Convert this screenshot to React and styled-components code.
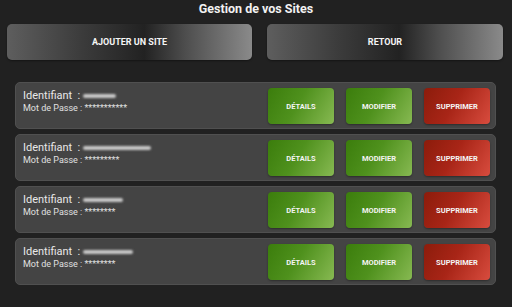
import React from "react";
import styled, { createGlobalStyle } from "styled-components";

const Global = createGlobalStyle`
  html, body { margin: 0; padding: 0; background: #212121; }
  body { font-family: Roboto, "Liberation Sans", sans-serif; color: #fff; }
`;

const Page = styled.div`
  width: 512px;
  height: 307px;
  background: #212121;
  overflow: hidden;
`;

const Title = styled.h1`
  margin: 0;
  height: 20px;
  line-height: 17px;
  text-align: center;
  font-size: 12.5px;
  font-weight: 700;
  color: #f2f2f2;
`;

const TopBar = styled.div`
  display: grid;
  grid-template-columns: 245px 236px;
  column-gap: 15px;
  padding: 4px 0 0 7px;
`;

const TopButton = styled.button`
  height: 36px;
  border: none;
  border-radius: 5px;
  background: linear-gradient(90deg, #5e5e5e 0%, #3c3c3c 30%, #222 56%, #4e4e4e 73%, #8a8a8a 100%);
  color: #f5f5f5;
  font-family: Roboto, "Liberation Sans", sans-serif;
  font-weight: 700;
  font-size: 9px;
  padding: 0;
  box-shadow: 0 1px 2px rgba(0,0,0,0.4);
`;

const List = styled.div`
  display: flex;
  flex-direction: column;
  gap: 5px;
  margin: 22px 16px 0 15px;
`;

const Row = styled.div`
  display: flex;
  align-items: flex-start;
  background: #444;
  border: 1px solid #505050;
  border-radius: 5px;
  box-sizing: border-box;
  height: 47px;
`;

const Info = styled.div`
  flex: 1;
  padding: 6px 0 0 7px;
`;

const IdLine = styled.div`
  display: flex;
  align-items: center;
  font-size: 11px;
  line-height: 13px;
  color: #e8e8e8;
`;

const Blur = styled.span`
  display: inline-block;
  height: 4px;
  margin-left: 3px;
  margin-top: 1px;
  border-radius: 3px;
  background: #c8c8c8;
  filter: blur(1.3px);
`;

const PassLine = styled.div`
  margin-top: 1px;
  font-size: 9px;
  line-height: 11px;
  color: #e0e0e0;
`;

const Actions = styled.div`
  display: flex;
  gap: 12px;
  padding: 5px 5px 0 0;
`;

const ActionButton = styled.button`
  width: 66px;
  height: 36px;
  border: none;
  border-radius: 4px;
  padding: 0;
  font-family: Roboto, "Liberation Sans", sans-serif;
  font-weight: 700;
  font-size: 7.5px;
  color: #f4f4f4;
  box-shadow: 0 1px 2px rgba(0,0,0,0.35);
  background: ${p => p.$danger
    ? "linear-gradient(120deg, #8c1c0b 0%, #a82517 45%, #d84c3e 100%)"
    : "linear-gradient(120deg, #3b7d0c 0%, #4f911d 45%, #87b952 100%)"};
`;

const sites = [
  { blur: 33, pass: "***********" },
  { blur: 68, pass: "*********" },
  { blur: 40, pass: "********" },
  { blur: 50, pass: "********" },
];

export default function App() {
  return (
    <Page>
      <Global />
      <Title>Gestion de vos Sites</Title>
      <TopBar>
        <TopButton>AJOUTER UN SITE</TopButton>
        <TopButton>RETOUR</TopButton>
      </TopBar>
      <List>
        {sites.map((s, i) => (
          <Row key={i}>
            <Info>
              <IdLine>
                Identifiant&nbsp;&nbsp;:
                <Blur style={{ width: s.blur }} />
              </IdLine>
              <PassLine>Mot de Passe : {s.pass}</PassLine>
            </Info>
            <Actions>
              <ActionButton>DÉTAILS</ActionButton>
              <ActionButton>MODIFIER</ActionButton>
              <ActionButton $danger>SUPPRIMER</ActionButton>
            </Actions>
          </Row>
        ))}
      </List>
    </Page>
  );
}
